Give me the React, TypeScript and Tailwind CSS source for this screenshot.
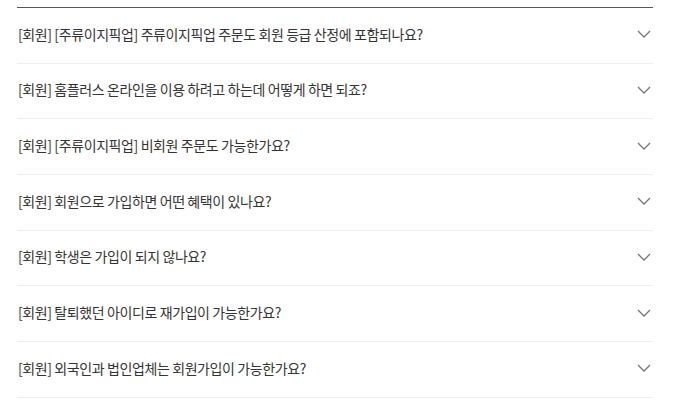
const items = [
  "[회원] [주류이지픽업] 주류이지픽업 주문도 회원 등급 산정에 포함되나요?",
  "[회원] 홈플러스 온라인을 이용 하려고 하는데 어떻게 하면 되죠?",
  "[회원] [주류이지픽업] 비회원 주문도 가능한가요?",
  "[회원] 회원으로 가입하면 어떤 혜택이 있나요?",
  "[회원] 학생은 가입이 되지 않나요?",
  "[회원] 탈퇴했던 아이디로 재가입이 가능한가요?",
  "[회원] 외국인과 법인업체는 회원가입이 가능한가요?",
]

function Chevron() {
  return (
    <svg width="14" height="8" viewBox="0 0 14 8" fill="none" className="shrink-0">
      <path d="M1 1l6 6 6-6" stroke="#777" strokeWidth="1.3" />
    </svg>
  )
}

export default function App() {
  return (
    <div className="w-[680px] h-[400px] bg-white pt-[7px] font-['Noto_Sans_CJK_KR',sans-serif]">
      <ul className="ml-[17px] w-[636px] border-t-[1.5px] border-[#555]">
        {items.map((q) => (
          <li
            key={q}
            className="h-[55.67px] flex items-center justify-between pl-[1px] pr-[2px] pb-[2px] border-b border-[#eeeeee]"
          >
            <span className="text-[14px] text-[#333] tracking-[-0.4px]">{q}</span>
            <Chevron />
          </li>
        ))}
      </ul>
    </div>
  )
}
